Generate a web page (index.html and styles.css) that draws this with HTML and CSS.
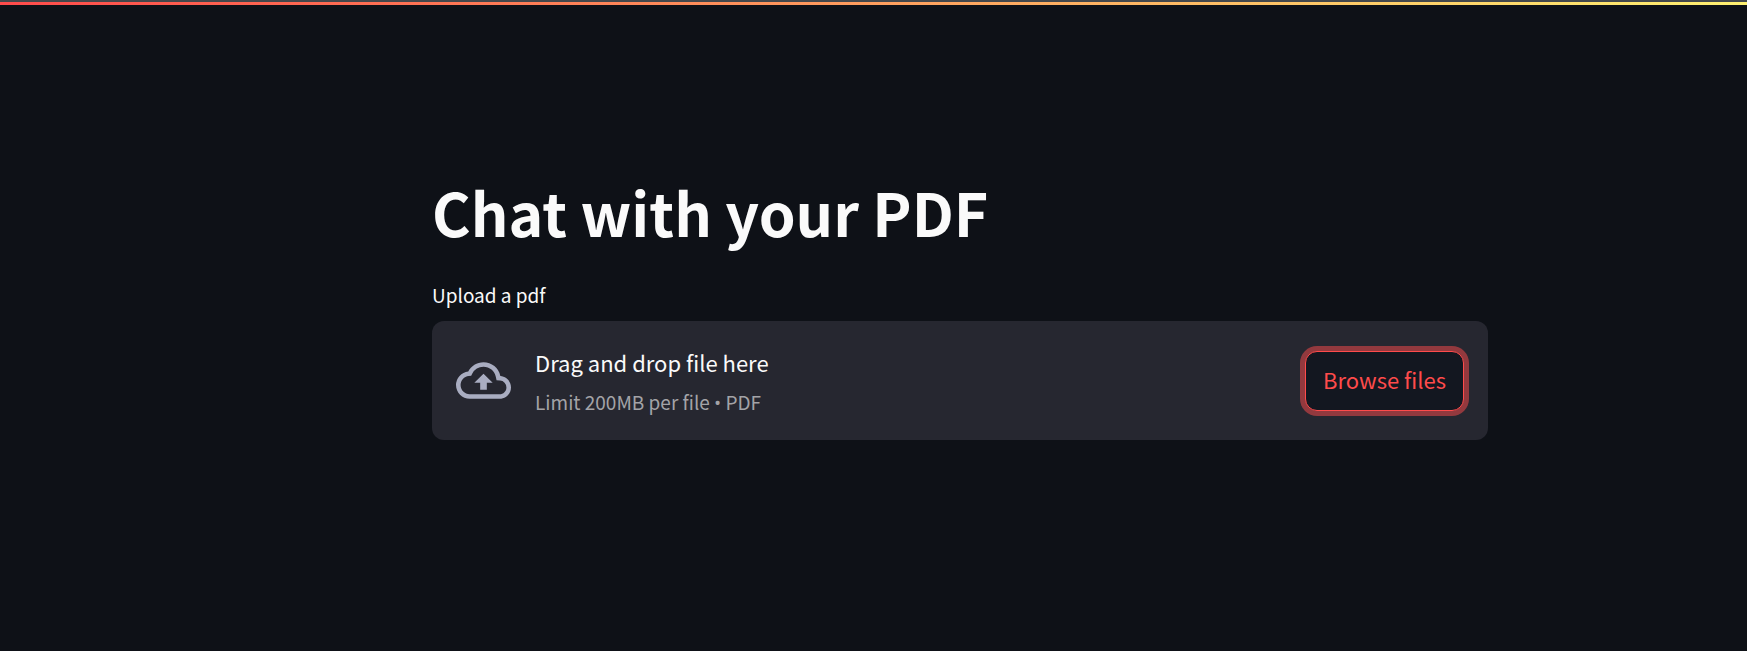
FILE: index.html
```
<!DOCTYPE html>
<html lang="en">
<head>
<meta charset="utf-8">
<title>Chat with your PDF</title>
<link rel="stylesheet" href="styles.css">
</head>
<body>
<div class="decoration"></div>
<div class="page">
<main class="content">
  <h1 class="title">Chat with your PDF</h1>
  <section class="uploader" aria-labelledby="upload-label">
    <p class="uploader-label" id="upload-label">Upload a pdf</p>
    <div class="dropzone">
      <svg class="cloud" viewBox="0 0 24 24" aria-hidden="true"><path d="M19.35 10.04A7.49 7.49 0 0 0 12 4C9.11 4 6.6 5.64 5.35 8.04A5.994 5.994 0 0 0 0 14c0 3.31 2.69 6 6 6h13c2.76 0 5-2.24 5-5 0-2.64-2.05-4.78-4.65-4.96zM19 18H6c-2.21 0-4-1.79-4-4 0-2.05 1.53-3.76 3.56-3.97l1.07-.11.5-.95A5.469 5.469 0 0 1 12 6c2.62 0 4.88 1.86 5.39 4.43l.3 1.5 1.53.11A2.98 2.98 0 0 1 22 15c0 1.65-1.35 3-3 3zM8 13h2.55v3h2.9v-3H16l-4-4z"/></svg>
      <div class="instructions">
        <span class="prompt">Drag and drop file here</span>
        <small class="limit">Limit 200MB per file <span class="bullet">•</span> PDF</small>
      </div>
      <button class="browse" type="button">Browse files</button>
    </div>
  </section>
</main>
</div>
</body>
</html>
```
FILE: styles.css
```
* { box-sizing: border-box; }

body {
  margin: 0;
  min-height: 100vh;
  background: #0e1117;
  color: #fafafa;
  font-family: "Noto Sans CJK SC", "Open Sans", sans-serif;
}

.decoration {
  height: 5px;
  border-top: 2px solid #44484c;
  background: linear-gradient(90deg, #ff4b4b, #fff171) padding-box;
}

.page {
  padding: 168px 0 0 173px;
}

.content {
  max-width: 1056px;
  margin: 0 auto;
}

.title {
  margin: 0;
  font-size: 59px;
  font-weight: 700;
  line-height: 78px;
}

.uploader-label {
  margin: 28px 0 10px;
  font-size: 19px;
  line-height: 32px;
}

.dropzone {
  display: flex;
  align-items: center;
  padding: 24px;
  border-radius: 12px;
  background: #262730;
}

.cloud {
  flex: none;
  width: 55px;
  height: 55px;
  margin-right: 24px;
  fill: #a9adc1;
}

.instructions {
  display: flex;
  flex-direction: column;
  gap: 8px;
  margin-right: auto;
}

.prompt {
  font-size: 22px;
  line-height: 35px;
}

.limit {
  color: #a3a3a7;
  font-size: 19px;
  line-height: 28px;
}

.bullet {
  font-family: "Open Sans", sans-serif;
  line-height: 1;
}

.browse {
  padding: 8px 17px 12px;
  border: 1px solid #ff4b4b;
  border-radius: 12px;
  background: #131720;
  box-shadow: 0 0 0 5px rgba(255, 75, 75, 0.5);
  color: #ff4b4b;
  font: inherit;
  font-size: 22px;
  line-height: 38px;
}
```
